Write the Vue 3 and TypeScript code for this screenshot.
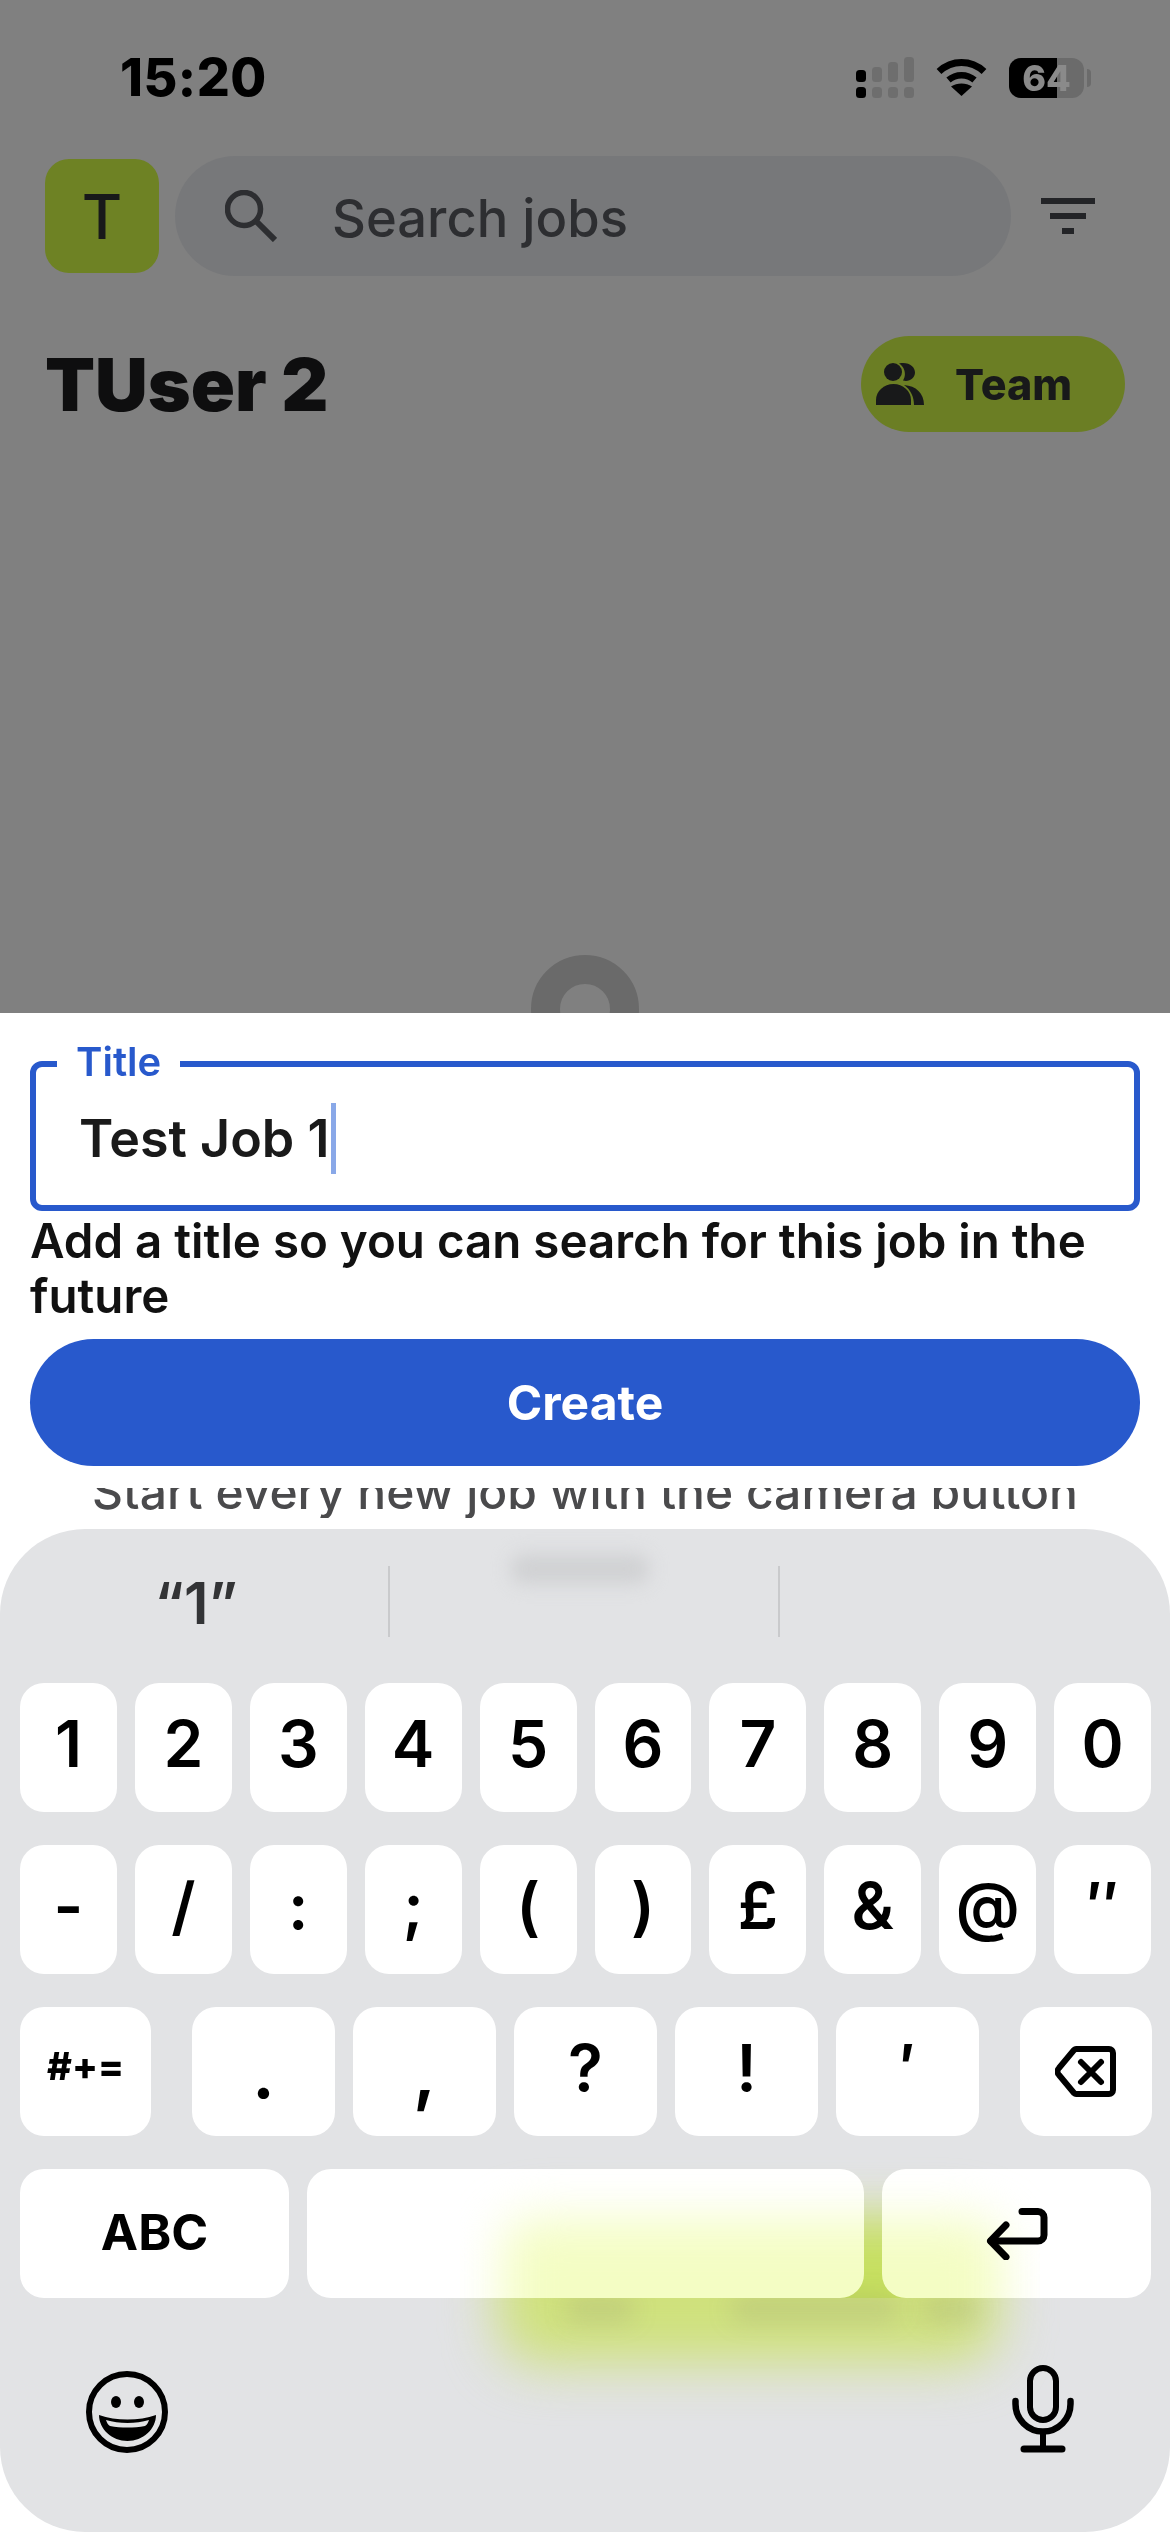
<template>
  <div class="screen">
    <div class="backdrop">
      <div class="status-bar">
        <span class="time">15:20</span>
        <div class="status-icons">
          <svg class="signal" width="58" height="41" viewBox="0 0 58 41">
            <rect x="0" y="13" width="10" height="12" rx="3.5" fill="#000" />
            <rect x="16" y="10" width="10" height="15" rx="3.5" fill="#6e6e6e" />
            <rect x="32" y="5" width="10" height="20" rx="3.5" fill="#6e6e6e" />
            <rect x="48" y="0" width="10" height="25" rx="3.5" fill="#6e6e6e" />
            <rect x="0" y="30" width="10" height="11" rx="3.5" fill="#000" />
            <rect x="16" y="30" width="10" height="11" rx="3.5" fill="#6e6e6e" />
            <rect x="32" y="30" width="10" height="11" rx="3.5" fill="#6e6e6e" />
            <rect x="48" y="30" width="10" height="11" rx="3.5" fill="#6e6e6e" />
          </svg>
          <svg class="wifi" width="51" height="37" viewBox="0 0 51 37">
            <path d="M3 12.5 C16 0.5 35 0.5 48 12.5" fill="none" stroke="#000" stroke-width="7" />
            <path d="M12.5 21 C20 14.5 31 14.5 38.5 21" fill="none" stroke="#000" stroke-width="6.5" />
            <path d="M25.5 37 L15 27.5 C21 23.5 30 23.5 36 27.5 Z" fill="#000" />
          </svg>
          <div class="battery">
            <span class="battery-level"></span>
            <span class="battery-text">64</span>
          </div>
          <span class="battery-nub"></span>
        </div>
      </div>

      <div class="toolbar">
        <div class="avatar">T</div>
        <div class="search">
          <svg width="52" height="52" viewBox="0 0 52 52">
            <circle cx="19" cy="19" r="16.5" fill="none" stroke="#2d2e31" stroke-width="5.5" />
            <path d="M31 31 L50 50" stroke="#2d2e31" stroke-width="6" />
          </svg>
          <span class="search-text">Search jobs</span>
        </div>
        <div class="filter">
          <span class="filter-line wide"></span>
          <span class="filter-line mid"></span>
          <span class="filter-line small"></span>
        </div>
      </div>

      <div class="title-row">
        <h1 class="user-name">TUser 2</h1>
        <div class="team-pill">
          <svg width="48" height="42" viewBox="0 0 48 42">
            <circle cx="17" cy="9" r="9" fill="#18191a" />
            <path d="M0 42 V37 C0 28 8 21 17.5 21 S35 28 35 37 V42 Z" fill="#18191a" />
            <path d="M23 .5 C33 -1.5 39 4 39 9.5 C39 15 33 19.5 27 17.5 C30 13 30 5 23 .5 Z" fill="#18191a" />
            <path d="M28 22 C40 23 48 30 48 42 H38 C38 34 35 27 28 22 Z" fill="#18191a" />
          </svg>
          <span>Team</span>
        </div>
      </div>

      <div class="camera-ring"></div>
    </div>

    <div class="sheet">
      <div class="field">
        <span class="field-label">Title</span>
        <span class="field-value">Test Job 1</span><span class="caret"></span>
      </div>
      <p class="helper">Add a title so you can search for this job in the future</p>
      <button class="create-button">Create</button>
      <div class="hint-clip">
        <div class="hint">Start every new job with the camera button</div>
      </div>
    </div>

    <div class="keyboard">
      <span class="blob-back"></span>
      <span class="blob-shade shade-a"></span>
      <span class="blob-shade shade-b"></span>
      <span class="blob-shade shade-c"></span>

      <div class="suggestions">
        <div class="suggestion first">“1”</div>
        <div class="suggestion"><span class="blurred-word"></span></div>
        <div class="suggestion"></div>
      </div>

      <div class="key-row">
        <div v-for="k in digits" :key="k" class="key">{{ k }}</div>
      </div>
      <div class="key-row">
        <div v-for="k in symbols" :key="k" class="key">{{ k }}</div>
      </div>
      <div class="key-row">
        <div class="key side small-label">#+=</div>
        <div v-for="k in punctuation" :key="k" class="key punct" :class="{ low: k === '.' || k === ',' }">{{ k }}</div>
        <div class="key side-right">
          <svg width="62" height="51" viewBox="0 0 62 51" fill="none" stroke="#000" stroke-width="6" stroke-linejoin="round" stroke-linecap="round">
            <path d="M22 3 H54 a4 4 0 0 1 4 4 V44 a4 4 0 0 1 -4 4 H22 a4 4 0 0 1 -3 -1 L4 29 a5 5 0 0 1 0 -7 L19 4 a4 4 0 0 1 3 -1 Z" />
            <path d="M26 16 L46 36 M46 16 L26 36" />
          </svg>
        </div>
      </div>
      <div class="key-row">
        <div class="key wide-key abc">ABC</div>
        <div class="key space"></div>
        <div class="key wide-key return-key">
          <svg width="62" height="52" viewBox="0 0 62 52" fill="none" stroke="#000" stroke-width="7" stroke-linejoin="round" stroke-linecap="round">
            <path d="M36 3.5 H52 a6 6 0 0 1 6 6 V27 a6 6 0 0 1 -6 6 H5" />
            <path d="M20 17 L4.5 33 L20 49" />
          </svg>
        </div>
      </div>

      <div class="keyboard-bottom">
        <svg width="82" height="82" viewBox="0 0 82 82">
          <circle cx="41" cy="41" r="38" fill="none" stroke="#000" stroke-width="6" />
          <ellipse cx="30" cy="31" rx="5" ry="6" fill="#000" />
          <ellipse cx="53" cy="31" rx="5" ry="6" fill="#000" />
          <path d="M13 44 C30 50 53 50 70 44 C70 58 57 70 41.5 70 C26 70 13 58 13 44 Z" fill="#000" />
          <path d="M20 49 C33 53 50 53 63 49 C62 52 61 54 59 55 C48 57 35 57 24 55 C22 54 21 52 20 49 Z" fill="#e2e3e5" />
        </svg>
        <svg width="62" height="88" viewBox="0 0 62 88" fill="none" stroke="#000" stroke-linecap="round">
          <rect x="18" y="3" width="26" height="52" rx="13" stroke-width="6" />
          <path d="M3.5 36 V39 a27.5 27.5 0 0 0 55 0 V36" stroke-width="6.5" />
          <path d="M31 68 V84" stroke-width="6" stroke-linecap="butt" />
          <path d="M12 84 H50" stroke-width="7" />
        </svg>
      </div>

      <div class="blob-front-clip">
        <span class="blob-front"></span>
      </div>
    </div>
  </div>
</template>

<script setup lang="ts">
const digits: string[] = ['1', '2', '3', '4', '5', '6', '7', '8', '9', '0']
const symbols: string[] = ['-', '/', ':', ';', '(', ')', '£', '&', '@', '″']
const punctuation: string[] = ['.', ',', '?', '!', '′']
</script>

<style scoped>
.screen {
  width: 1170px;
  height: 2532px;
  overflow: hidden;
  background: #fff;
  font-family: Inter, "Liberation Sans", sans-serif;
  color: #000;
}

.backdrop {
  position: relative;
  height: 1013px;
  overflow: hidden;
  background: #808080;
  padding-top: 57px;
  box-sizing: border-box;
}

.status-bar {
  display: flex;
  justify-content: space-between;
  align-items: center;
  height: 41px;
  padding: 0 79px 0 120px;
}

.time {
  font-size: 52px;
  font-weight: 800;
  color: #000;
  letter-spacing: 0.5px;
}

.status-icons {
  display: flex;
  align-items: center;
}

.wifi {
  margin-left: 22px;
}

.battery {
  position: relative;
  width: 75px;
  height: 40px;
  margin-left: 22px;
  border-radius: 12px;
  overflow: hidden;
  background: #6b6b6b;
  display: flex;
  align-items: center;
  justify-content: center;
}

.battery-level {
  position: absolute;
  left: 0;
  top: 0;
  bottom: 0;
  width: 48px;
  background: #000;
}

.battery-text {
  position: relative;
  font-size: 36px;
  font-weight: 800;
  color: #8a8a8a;
}

.battery-nub {
  width: 4px;
  height: 18px;
  margin-left: 3px;
  border-radius: 0 4px 4px 0;
  background: #6b6b6b;
}

.toolbar {
  display: flex;
  align-items: center;
  height: 120px;
  margin-top: 58px;
  padding-left: 45px;
}

.avatar {
  width: 114px;
  height: 114px;
  border-radius: 24px;
  background: #6e8224;
  color: #18191a;
  font-size: 62px;
  font-weight: 500;
  display: flex;
  align-items: center;
  justify-content: center;
}

.search {
  display: flex;
  align-items: center;
  width: 836px;
  height: 120px;
  margin-left: 16px;
  padding-left: 50px;
  box-sizing: border-box;
  border-radius: 60px;
  background: #77787a;
}

.search-text {
  margin-left: 55px;
  padding-top: 3px;
  font-size: 52.5px;
  font-weight: 500;
  color: #2d2e31;
}

.filter {
  display: flex;
  flex-direction: column;
  align-items: center;
  gap: 9px;
  width: 54px;
  margin-left: 30px;
}

.filter-line {
  height: 6px;
  background: #232427;
}

.filter-line.wide {
  width: 54px;
}

.filter-line.mid {
  width: 36px;
}

.filter-line.small {
  width: 12px;
}

.title-row {
  display: flex;
  justify-content: space-between;
  align-items: center;
  height: 96px;
  margin-top: 60px;
  padding: 0 45px;
}

.user-name {
  margin: 0;
  font-size: 73px;
  font-weight: 900;
  color: #0e0e0f;
}

.team-pill {
  display: flex;
  align-items: center;
  gap: 31px;
  width: 264px;
  height: 96px;
  padding-left: 15px;
  box-sizing: border-box;
  border-radius: 48px;
  background: #6b7e24;
  color: #18191a;
  font-size: 43px;
  font-weight: 800;
}

.camera-ring {
  position: absolute;
  left: 531px;
  top: 955px;
  width: 108px;
  height: 108px;
  box-sizing: border-box;
  border: 29px solid #6a6a6a;
  border-radius: 50%;
}

.sheet {
  height: 516px;
  padding: 48px 30px 0;
  box-sizing: border-box;
  background: #fff;
}

.field {
  position: relative;
  display: flex;
  align-items: center;
  height: 150px;
  padding-left: 43px;
  padding-top: 4px;
  box-sizing: border-box;
  border: 6px solid #2859cc;
  border-radius: 12px;
}

.field-label {
  position: absolute;
  left: 21px;
  top: -28px;
  padding: 0 19px;
  background: #fff;
  color: #2859cc;
  font-size: 40px;
  font-weight: 600;
  line-height: 46px;
}

.field-value {
  font-size: 52px;
  font-weight: 600;
  color: #1a1a1a;
}

.caret {
  width: 5px;
  height: 71px;
  margin-left: 2px;
  background: #89a8e8;
}

.helper {
  margin: 0;
  padding-top: 2px;
  font-size: 47.5px;
  font-weight: 600;
  line-height: 55px;
  color: #111;
}

.create-button {
  display: block;
  width: 100%;
  height: 127px;
  margin-top: 16px;
  border: none;
  border-radius: 64px;
  background: #2859cc;
  color: #fff;
  font-family: inherit;
  font-size: 48px;
  font-weight: 700;
}

.hint-clip {
  height: 30px;
  margin: 22px -30px 0;
  overflow: hidden;
}

.hint {
  margin-top: -17px;
  font-size: 48px;
  font-weight: 500;
  line-height: 41px;
  text-align: center;
  color: #4a4a4c;
}

.keyboard {
  position: relative;
  height: 1003px;
  padding: 0 19px 0 20px;
  box-sizing: border-box;
  border-radius: 85px;
  background: #e2e3e5;
  overflow: hidden;
}

.suggestions {
  display: grid;
  grid-template-columns: 368px 390px 1fr;
  height: 154px;
  padding-top: 37px;
  box-sizing: border-box;
}

.suggestion {
  position: relative;
  height: 71px;
  display: flex;
  align-items: center;
  justify-content: center;
  font-size: 58px;
  font-weight: 600;
  color: #333436;
}

.suggestion.first {
  padding-right: 16px;
  padding-top: 3px;
  box-sizing: border-box;
}

.suggestion + .suggestion {
  border-left: 2px solid #c9cacc;
}

.blurred-word {
  position: absolute;
  left: 121px;
  top: -12px;
  width: 138px;
  height: 30px;
  border-radius: 12px;
  background: #d0d1d3;
  filter: blur(9px);
}

.key-row {
  position: relative;
  z-index: 1;
  display: flex;
  gap: 18px;
  height: 129px;
  margin-bottom: 33px;
}

.key {
  flex: 1;
  display: flex;
  align-items: center;
  justify-content: center;
  padding-bottom: 8px;
  box-sizing: border-box;
  border-radius: 24px;
  background: #fff;
  font-size: 64px;
  font-weight: 600;
  color: #000;
}

.key.side {
  flex: 0 0 131px;
  margin-right: 23px;
}

.key.side-right {
  flex: 0 0 132px;
  margin-left: 23px;
  padding-bottom: 0;
}

.key.small-label {
  font-size: 38px;
  font-weight: 800;
  padding-bottom: 12px;
}

.key.punct {
  flex: 0 0 143px;
}

.key.low {
  padding-top: 8px;
  font-size: 72px;
}

.key.wide-key {
  flex: 0 0 269px;
}

.key.abc {
  font-size: 50px;
  font-weight: 700;
  padding-bottom: 4px;
}

.key.return-key {
  padding-bottom: 0;
}

.key.space {
  flex: 1;
}

.keyboard-bottom {
  position: relative;
  z-index: 1;
  display: flex;
  justify-content: space-between;
  align-items: flex-end;
  height: 88px;
  margin-top: 67px;
  padding: 0 77px 0 66px;
}

.blob-back {
  position: absolute;
  left: 498px;
  top: 690px;
  width: 500px;
  height: 145px;
  border-radius: 40px;
  background: #cfe17c;
  filter: blur(26px);
}

.blob-shade {
  position: absolute;
  height: 24px;
  border-radius: 12px;
  background: rgba(110, 100, 120, 0.16);
  filter: blur(12px);
}

.shade-a {
  left: 565px;
  top: 768px;
  width: 70px;
}

.shade-b {
  left: 730px;
  top: 768px;
  width: 170px;
}

.shade-c {
  left: 920px;
  top: 768px;
  width: 60px;
}

.blob-front-clip {
  position: absolute;
  z-index: 2;
  left: 460px;
  top: 640px;
  width: 580px;
  height: 129px;
  overflow: hidden;
  mix-blend-mode: multiply;
}

.blob-front {
  position: absolute;
  left: 42px;
  top: 50px;
  width: 500px;
  height: 140px;
  border-radius: 30px;
  background: #f4fdc4;
  filter: blur(24px);
}
</style>

<style>
html,
body {
  margin: 0;
  background: #fff;
}
</style>
